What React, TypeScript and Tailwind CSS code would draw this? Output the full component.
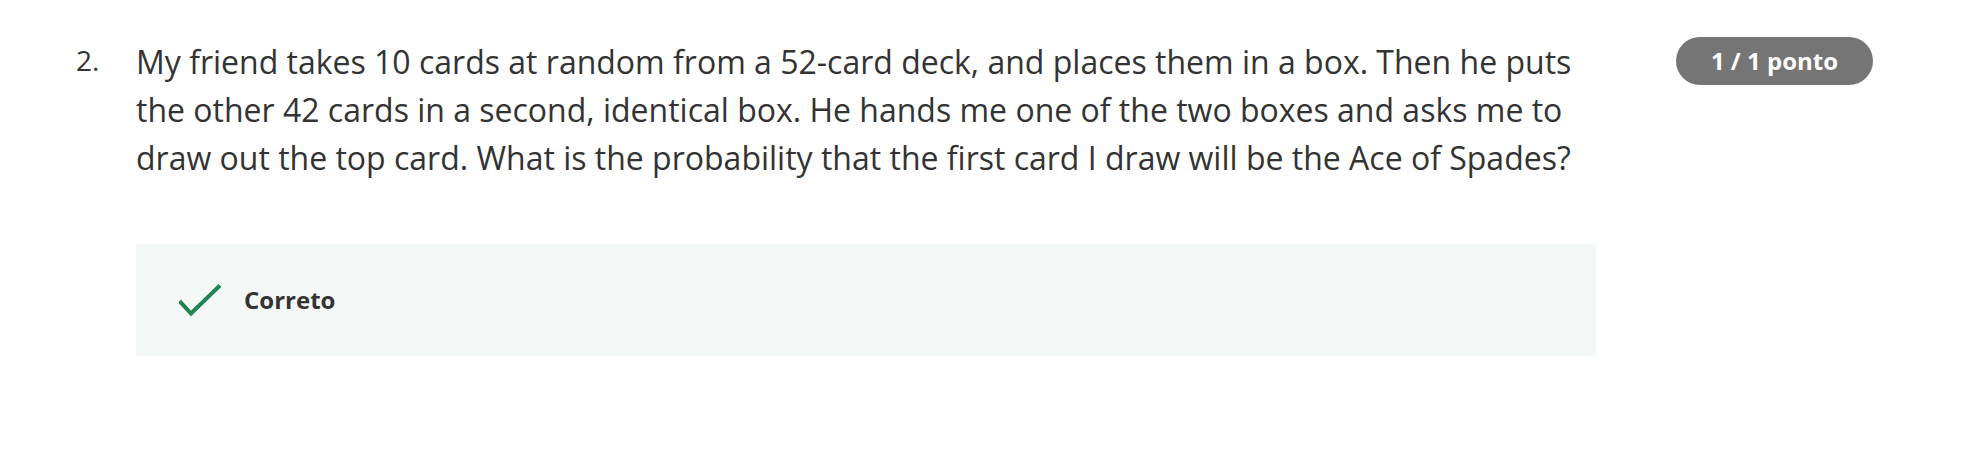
import React from "react";

export default function App() {
  return (
    <div className="w-[1972px] h-[454px] bg-white" style={{ fontFamily: '"Open Sans", sans-serif' }}>
      <div className="flex pt-[38px]">
        <div className="w-[136px] shrink-0 pl-[76px] pt-[2px] text-[28px] leading-[40px] text-[#333333]">2.</div>
        <div className="w-[1460px] shrink-0">
          <p className="text-[32px] leading-[48px] text-[#333333]">
            My friend takes 10 cards at random from a 52-card deck, and places them in a box. Then he puts the other 42 cards in a second, identical box. He hands me one of the two boxes and asks me to draw out the top card. What is the probability that the first card I draw will be the Ace of Spades?
          </p>
          <div className="mt-[62px] h-[112px] bg-[#f3f8f6] flex items-center pl-[43px]">
            <svg width="42" height="32" viewBox="0 0 42 32" className="shrink-0">
              <path d="M0.5 17 L12 29.5 L41 1.5" fill="none" stroke="#1f8354" strokeWidth="4" />
            </svg>
            <span className="ml-[23px] text-[24px] font-bold text-[#333333]">Correto</span>
          </div>
        </div>
        <div className="ml-[80px] h-[48px] w-[197px] rounded-full bg-[#757575] flex items-center justify-center text-white font-bold text-[24px] mt-[-1px]">
          1 / 1 ponto
        </div>
      </div>
    </div>
  );
}
